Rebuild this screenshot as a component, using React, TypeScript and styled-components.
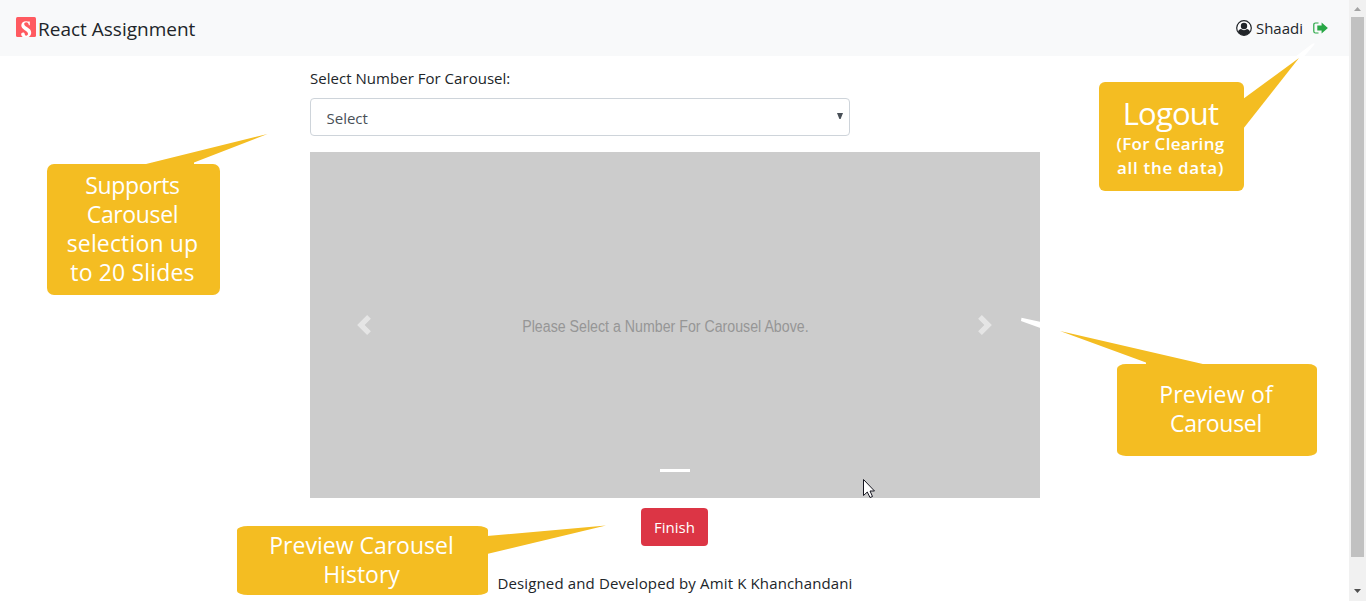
import React from "react";
import styled, { createGlobalStyle } from "styled-components";

const GlobalStyle = createGlobalStyle`
  *, *::before, *::after { box-sizing: border-box; }
  html, body { margin: 0; height: 100%; overflow: hidden; background: #fff; }
  body {
    font-family: "Open Sans", "Noto Sans", sans-serif;
    font-size: 15px;
    line-height: 24px;
    color: #212529;
  }
`;

const Window = styled.div`
  position: relative;
  display: flex;
  width: 1366px;
  height: 601px;
  overflow: hidden;
`;

const Page = styled.div`
  flex: 1;
  display: flex;
  flex-direction: column;
`;

const Navbar = styled.header`
  display: flex;
  align-items: center;
  justify-content: space-between;
  height: 56px;
  padding: 0 21px 0 16px;
  background: #f8f9fa;
`;

const Brand = styled.div`
  display: flex;
  align-items: center;
  gap: 2px;
  padding-top: 2px;
  svg { margin-top: -5px; }
`;

const User = styled.div`
  display: flex;
  align-items: center;
`;

const Text = styled.span<{ $size?: number; $spacing?: number }>`
  font-size: ${(p) => p.$size ?? 15}px;
  letter-spacing: ${(p) => p.$spacing ?? 0}px;
  white-space: nowrap;
`;

const UserName = styled(Text)`
  margin: 0 10px 0 4px;
`;

const Content = styled.main`
  display: flex;
  flex-direction: column;
  width: 730px;
  margin: 10px 0 0 310px;
`;

const SelectBox = styled.div`
  display: flex;
  align-items: center;
  justify-content: space-between;
  width: 540px;
  height: 38px;
  margin: 8px 0 16px;
  padding: 2px 6px 0 15.5px;
  border: 1px solid #ced4da;
  border-radius: 4px;
  color: #495057;
  svg { margin-top: -4px; }
`;

const Carousel = styled.section`
  position: relative;
  display: flex;
  align-items: center;
  justify-content: space-between;
  height: 346px;
  padding: 0 45px 0 44px;
  background: #ccc;
`;

const Slide = styled.p`
  margin: 4px 0 0 -19px;
  font: 16px/20px "Liberation Sans", sans-serif;
  color: #969696;
  white-space: nowrap;
  transform: scaleX(0.887);
`;

const Indicator = styled.span`
  position: absolute;
  left: 350px;
  bottom: 26px;
  width: 30px;
  height: 3px;
  background: #fff;
`;

const FinishButton = styled.button`
  align-self: center;
  width: 67px;
  height: 38px;
  margin: 10px 1px 25px 0;
  padding: 0;
  border: 0;
  border-radius: 4px;
  background: #dc3545;
  color: #fff;
  font: inherit;
`;

const Footer = styled.footer`
  align-self: center;
`;

const ScrollTrack = styled.div`
  display: flex;
  flex-direction: column;
  align-items: center;
  width: 17px;
  padding: 7px 0 6px;
  background: #f1f1f1;
`;

const ScrollThumb = styled.div`
  width: 13px;
  height: 540px;
  margin: 6px 0 32px;
  background: #c1c1c1;
`;

const Overlay = styled.svg`
  position: absolute;
  inset: 0;
  pointer-events: none;
`;

const Callout = styled.div<{
  $x: number;
  $y: number;
  $w: number;
  $h: number;
  $r?: string;
  $lift?: number;
}>`
  position: absolute;
  left: ${(p) => p.$x}px;
  top: ${(p) => p.$y}px;
  width: ${(p) => p.$w}px;
  height: ${(p) => p.$h}px;
  display: flex;
  flex-direction: column;
  align-items: center;
  justify-content: center;
  padding: 0 2px ${(p) => p.$lift ?? 1}px 0;
  border-radius: ${(p) => p.$r ?? "7px"};
  background: #f4bd22;
  color: #fff;
`;

const CalloutLine = styled.span<{ $size?: number; $lh?: number; $spacing?: number; $weight?: number }>`
  font-size: ${(p) => p.$size ?? 23}px;
  line-height: ${(p) => p.$lh ?? 29}px;
  letter-spacing: ${(p) => p.$spacing ?? 0}px;
  font-weight: ${(p) => p.$weight ?? 400};
  white-space: nowrap;
`;

const Logo = () => (
  <svg width="20" height="20" viewBox="0 0 20 20">
    <rect width="20" height="20" rx="1.5" fill="#ff5a60" />
    <path
      d="M13.8 8.2L12.9 8.2C12.6 6.3 11.7 5.3 10.3 5.3C8.9 5.3 8.2 6 8.2 7.1C8.2 8.4 9.5 9.2 11.2 10.3C13.7 11.9 15.2 13.200 15.2 15.700C15.200 17.600 14.200 19.200 12.600 20H7.200C6 19.700 5.200 18.700 5.200 17.500C5.200 16.300 6 15.600 7 15.600C8.100 15.600 8.700 16.300 8.800 17.300C8.900 18.300 9.300 18.700 10.100 18.700C11.400 18.700 12 17.900 12 16.800C12 15.300 10.600 14.400 8.800 13.200C6.700 11.800 5.300 10.400 5.300 8.300C5.300 5.800 7.400 4.200 10.100 4.200C11.700 4.200 12.800 4.700 13.800 4.400Z"
      fill="#fff"
    />
  </svg>
);

const UserIcon = () => (
  <svg width="16" height="16" viewBox="0 0 16 16">
    <circle cx="8" cy="8" r="7.3" fill="#fff" stroke="#212529" strokeWidth="1.2" />
    <circle cx="8" cy="6" r="3.2" fill="#212529" />
    <path
      d="M2 11.800C2.500 9.800 4 9.200 5 9.100Q8 11.300 11 9.100C12 9.200 13.500 9.800 14 11.800Q11.800 15.200 8 15.200Q4.200 15.200 2 11.800Z"
      fill="#212529"
    />
  </svg>
);

const LogoutIcon = () => (
  <svg width="15" height="12" viewBox="0 0 15 12">
    <path d="M5.5 1H2.500Q.8 1 .8 2.800V9.200Q.8 11 2.500 11H5.500" fill="none" stroke="#28a745" strokeWidth="1.2" />
    <path d="M4.300 3.600H8.600V.5L14.900 6L8.600 11.500V8.400H4.300Z" fill="#28a745" />
  </svg>
);

const Chevron = ({ d }: { d: string }) => (
  <svg width="20" height="20" viewBox="0 0 8 8" fill="#fff" opacity=".5">
    <path d={d} />
  </svg>
);

export default function App() {
  return (
    <>
      <GlobalStyle />
      <Window>
        <Page>
          <Navbar>
            <Brand>
              <Logo />
              <Text $size={19}>React Assignment</Text>
            </Brand>
            <User>
              <UserIcon />
              <UserName>Shaadi</UserName>
              <LogoutIcon />
            </User>
          </Navbar>
          <Content>
            <Text $spacing={0.03}>Select Number For Carousel:</Text>
            <SelectBox>
              <Text>Select</Text>
              <svg width="6" height="6" viewBox="0 0 6 6">
                <path d="M0 0H6L3.600 6H2.400Z" fill="#495057" />
              </svg>
            </SelectBox>
            <Carousel>
              <Chevron d="M5.25 0l-4 4 4 4 1.5-1.5L4.25 4l2.5-2.5L5.25 0z" />
              <Slide>Please Select a Number For Carousel Above.</Slide>
              <Chevron d="M2.75 0l-1.5 1.5L3.75 4l-2.5 2.5L2.75 8l4-4-4-4z" />
              <Indicator />
            </Carousel>
            <FinishButton>Finish</FinishButton>
            <Footer>
              <Text $spacing={0.14}>Designed and Developed by Amit K Khanchandani</Text>
            </Footer>
          </Content>
        </Page>
        <ScrollTrack>
          <svg width="7" height="4" viewBox="0 0 7 4">
            <path d="M3.5 0L7 4H0Z" fill="#a3a3a3" />
          </svg>
          <ScrollThumb />
          <svg width="7" height="4" viewBox="0 0 7 4">
            <path d="M0 0H7L3.5 4Z" fill="#505050" />
          </svg>
        </ScrollTrack>

        <Overlay width="1366" height="601" viewBox="0 0 1366 601">
          <path d="M1291 60L1312 44Q1316 42 1314 45L1301 60Z" fill="#fff" />
          <path d="M1021.5 317.8L1041 322V328.2L1021 321Z" fill="#fff" />
          <g fill="#f4bd22">
            <path d="M144 164.5L267.500 134L194 162.500V166H144Z" />
            <path d="M1243 99L1299 58L1243 129Z" />
            <path d="M1060 331L1205 364.5H1146V362.500Z" />
            <path d="M487 536L606 525.5L487 554Z" />
          </g>
          <path
            d="M863.5 479.5V495.5L867.3 492L870 497.5L872.5 496.5L870 491H874.5Z"
            fill="#fff"
            stroke="#15151f"
          />
        </Overlay>
        <Callout $x={47} $y={164} $w={173} $h={131}>
          <CalloutLine $spacing={-0.35}>Supports</CalloutLine>
          <CalloutLine $spacing={-0.35}>Carousel</CalloutLine>
          <CalloutLine $spacing={0.15}>selection up</CalloutLine>
          <CalloutLine $spacing={0.15}>to 20 Slides</CalloutLine>
        </Callout>
        <Callout $x={1099} $y={82} $w={145} $h={109} $r="6px" $lift={0}>
          <CalloutLine $size={31} $lh={38} $spacing={-0.8}>Logout</CalloutLine>
          <CalloutLine $size={17} $lh={24} $spacing={0.3} $weight={600}>(For Clearing</CalloutLine>
          <CalloutLine $size={17} $lh={24} $spacing={0.7} $weight={600}>all the data)</CalloutLine>
        </Callout>
        <Callout $x={1117} $y={364} $w={200} $h={92} $r="9px / 5px" $lift={3}>
          <CalloutLine $spacing={0.2}>Preview of</CalloutLine>
          <CalloutLine $spacing={-0.3}>Carousel</CalloutLine>
        </Callout>
        <Callout $x={237} $y={526} $w={251} $h={69} $r="11px / 4px">
          <CalloutLine>Preview Carousel</CalloutLine>
          <CalloutLine>History</CalloutLine>
        </Callout>
      </Window>
    </>
  );
}
